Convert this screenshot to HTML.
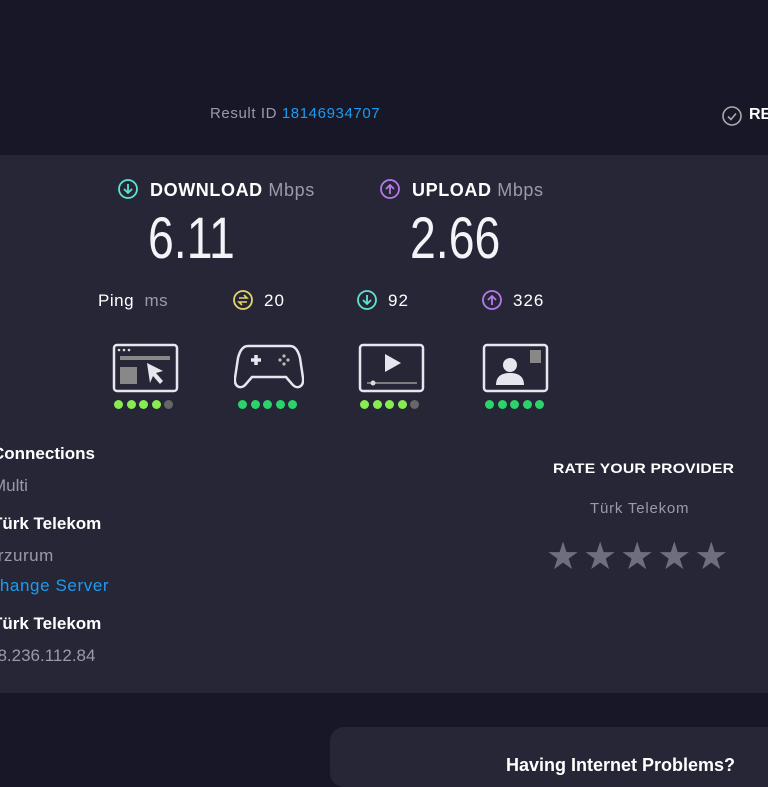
<!DOCTYPE html>
<html><head><meta charset="utf-8"><style>
body{margin:0;width:768px;height:768px;overflow:hidden;background:#171727;font-family:"Liberation Sans",sans-serif;color:#fff;position:relative}
.a{position:absolute;white-space:nowrap}
.panel{position:absolute;left:0;top:155px;width:768px;height:538px;background:#262637}
.g{color:#9a9aad}
.b{font-weight:bold}
.big{font-family:"Liberation Sans Narrow","Liberation Sans",sans-serif;font-size:58px;color:#f4f4f8;transform:scaleX(0.8);transform-origin:left top;letter-spacing:0px;font-weight:normal}
.dots span{display:inline-block;width:9px;height:9px;border-radius:50%;margin-right:3.5px;background:#2bd36b}
.star{font-size:38px;color:#6e6e7e}
</style></head><body>
<div class="a g" style="left:210px;top:105px;font-size:15px;letter-spacing:0.6px">Result ID <span style="color:#1c9bf0">18146934707</span></div>
<svg class="a" style="left:721px;top:105px" width="22" height="22" viewBox="0 0 22 22"><circle cx="11" cy="11" r="9" fill="none" stroke="#aaa" stroke-width="1.6"/><path d="M7 11.5l3 3 5-6" fill="none" stroke="#aaa" stroke-width="1.6"/></svg>
<div class="a b" style="left:749px;top:106px;font-size:16px">RE</div>
<div class="panel"></div>

<svg class="a" style="left:117px;top:178px" width="22" height="22" viewBox="0 0 22 22"><circle cx="11" cy="11" r="9" fill="none" stroke="#5fe3cf" stroke-width="1.8"/><path d="M11 6v9M7 11l4 4 4-4" fill="none" stroke="#5fe3cf" stroke-width="1.8"/></svg>
<div class="a" style="left:150px;top:180px;font-size:18px;letter-spacing:0.6px"><span class="b">DOWNLOAD</span> <span class="g">Mbps</span></div>
<div class="a big" style="left:148px;top:205px">6.11</div>

<svg class="a" style="left:379px;top:178px" width="22" height="22" viewBox="0 0 22 22"><circle cx="11" cy="11" r="9" fill="none" stroke="#b47ae8" stroke-width="1.8"/><path d="M11 16V7M7 11l4-4 4 4" fill="none" stroke="#b47ae8" stroke-width="1.8"/></svg>
<div class="a" style="left:412px;top:180px;font-size:18px;letter-spacing:0.6px"><span class="b">UPLOAD</span> <span class="g">Mbps</span></div>
<div class="a big" style="left:410px;top:205px">2.66</div>

<div class="a" style="left:98px;top:291px;font-size:17px;letter-spacing:0.5px">Ping <span class="g">&nbsp;ms</span></div>
<svg class="a" style="left:232px;top:289px" width="22" height="22" viewBox="0 0 22 22"><circle cx="11" cy="11" r="9" fill="none" stroke="#e3d56b" stroke-width="1.8"/><path d="M7 9h8l-3-3M15 13H7l3 3" fill="none" stroke="#e3d56b" stroke-width="1.6"/></svg>
<div class="a" style="left:264px;top:291px;font-size:17px;letter-spacing:1px">20</div>
<svg class="a" style="left:356px;top:289px" width="22" height="22" viewBox="0 0 22 22"><circle cx="11" cy="11" r="9" fill="none" stroke="#5fe3cf" stroke-width="1.8"/><path d="M11 6v9M7 11l4 4 4-4" fill="none" stroke="#5fe3cf" stroke-width="1.8"/></svg>
<div class="a" style="left:388px;top:291px;font-size:17px;letter-spacing:1px">92</div>
<svg class="a" style="left:481px;top:289px" width="22" height="22" viewBox="0 0 22 22"><circle cx="11" cy="11" r="9" fill="none" stroke="#b47ae8" stroke-width="1.8"/><path d="M11 16V7M7 11l4-4 4 4" fill="none" stroke="#b47ae8" stroke-width="1.8"/></svg>
<div class="a" style="left:513px;top:291px;font-size:17px;letter-spacing:1px">326</div>

<svg class="a" style="left:112px;top:343px" width="68" height="50" viewBox="0 0 68 50"><rect x="2" y="2" width="63" height="46" rx="3" fill="none" stroke="#e6e6ee" stroke-width="2.5"/><circle cx="7" cy="7" r="1.3" fill="#ddd"/><circle cx="12" cy="7" r="1.3" fill="#ddd"/><circle cx="17" cy="7" r="1.3" fill="#ddd"/><rect x="8" y="13" width="50" height="4" fill="#888"/><rect x="8" y="24" width="17" height="17" fill="#888"/><path d="M35 20l16 8-7 2 7 8-3 3-7-8-3 7z" fill="#e6e6ee"/></svg>
<svg class="a" style="left:234px;top:343px" width="70" height="50" viewBox="0 0 70 50"><path d="M14 3h42c5 0 8 4 10 12l3 20c1 9-6 12-11 6l-6-7H18l-6 7c-5 6-12 3-11-6l3-20C6 7 9 3 14 3z" fill="none" stroke="#e6e6ee" stroke-width="2.5"/><path d="M17 17h10M22 12v10" stroke="#e6e6ee" stroke-width="3.5"/><circle cx="50" cy="13" r="1.6" fill="#bbb"/><circle cx="46" cy="17" r="1.6" fill="#bbb"/><circle cx="54" cy="17" r="1.6" fill="#bbb"/><circle cx="50" cy="21" r="1.6" fill="#bbb"/></svg>
<svg class="a" style="left:358px;top:343px" width="68" height="50" viewBox="0 0 68 50"><rect x="2" y="2" width="63" height="46" rx="3" fill="none" stroke="#e6e6ee" stroke-width="2.5"/><path d="M27 11l16 9-16 9z" fill="#e6e6ee"/><path d="M9 40h50" stroke="#999" stroke-width="1.5"/><circle cx="15" cy="40" r="2.5" fill="#ddd"/></svg>
<svg class="a" style="left:482px;top:343px" width="68" height="50" viewBox="0 0 68 50"><rect x="2" y="2" width="63" height="46" rx="3" fill="none" stroke="#e6e6ee" stroke-width="2.5"/><circle cx="28" cy="22" r="7" fill="#e6e6ee"/><path d="M14 42c0-9 6-12 14-12s14 3 14 12z" fill="#e6e6ee"/><rect x="48" y="7" width="11" height="13" fill="#888"/></svg>

<div class="a dots" style="left:114px;top:396px"><span style="background:#86ec4f"></span><span style="background:#86ec4f"></span><span style="background:#86ec4f"></span><span style="background:#86ec4f"></span><span style="background:#666"></span></div>
<div class="a dots" style="left:238px;top:396px"><span></span><span></span><span></span><span></span><span></span></div>
<div class="a dots" style="left:360px;top:396px"><span style="background:#86ec4f"></span><span style="background:#86ec4f"></span><span style="background:#86ec4f"></span><span style="background:#86ec4f"></span><span style="background:#666"></span></div>
<div class="a dots" style="left:485px;top:396px"><span></span><span></span><span></span><span></span><span></span></div>

<div class="a b" style="left:-8px;top:444px;font-size:17px">Connections</div>
<div class="a g" style="left:-8px;top:476px;font-size:17px">Multi</div>
<div class="a b" style="left:-8px;top:514px;font-size:17px">Türk Telekom</div>
<div class="a g" style="left:-14px;top:546px;font-size:17px;letter-spacing:0.5px">Erzurum</div>
<div class="a" style="left:-13px;top:576px;font-size:17px;color:#1c9bf0;letter-spacing:0.6px">Change Server</div>
<div class="a b" style="left:-8px;top:614px;font-size:17px">Türk Telekom</div>
<div class="a g" style="left:-12px;top:646px;font-size:17px">78.236.112.84</div>

<div class="a b" style="left:553px;top:460px;font-size:14px;letter-spacing:0.2px;transform:scaleX(1.12);transform-origin:left">RATE YOUR PROVIDER</div>
<div class="a g" style="left:590px;top:500px;font-size:15px;letter-spacing:0.8px">Türk Telekom</div>
<div class="a star" style="left:546px;top:534px;letter-spacing:3px">★★★★★</div>

<div class="a" style="left:330px;top:727px;width:460px;height:60px;background:#262637;border-radius:14px"></div>
<div class="a b" style="left:506px;top:755px;font-size:18px">Having Internet Problems?</div>
</body></html>
